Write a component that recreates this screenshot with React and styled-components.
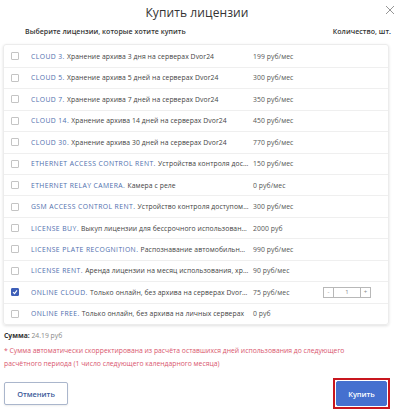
import React, { useState } from 'react';
import styled, { createGlobalStyle } from 'styled-components';

const GlobalStyle = createGlobalStyle`
  html, body {
    margin: 0;
    padding: 0;
    background: #fff;
    font-family: 'Open Sans', 'Noto Sans', sans-serif;
  }
  * {
    box-sizing: border-box;
  }
`;

const licenses = [
  { code: 'CLOUD 3', text: 'Хранение архива 3 дня на серверах Dvor24', price: '199 руб/мес' },
  { code: 'CLOUD 5', text: 'Хранение архива 5 дней на серверах Dvor24', price: '300 руб/мес' },
  { code: 'CLOUD 7', text: 'Хранение архива 7 дней на серверах Dvor24', price: '350 руб/мес' },
  { code: 'CLOUD 14', text: 'Хранение архива 14 дней на серверах Dvor24', price: '450 руб/мес' },
  { code: 'CLOUD 30', text: 'Хранение архива 30 дней на серверах Dvor24', price: '770 руб/мес' },
  { code: 'ETHERNET ACCESS CONTROL RENT', text: 'Устройства контроля доступом', price: '150 руб/мес' },
  { code: 'ETHERNET RELAY CAMERA', text: 'Камера с реле', price: '0 руб/мес' },
  { code: 'GSM ACCESS CONTROL RENT', text: 'Устройство контроля доступом для шлагбаума', price: '300 руб/мес' },
  { code: 'LICENSE BUY', text: 'Выкуп лицензии для бессрочного использования', price: '2000 руб' },
  { code: 'LICENSE PLATE RECOGNITION', text: 'Распознавание автомобильных номеров', price: '990 руб/мес' },
  { code: 'LICENSE RENT', text: 'Аренда лицензии на месяц использования, хранение', price: '90 руб/мес' },
  { code: 'ONLINE CLOUD', text: 'Только онлайн, без архива на серверах Dvor24', price: '75 руб/мес', checked: true },
  { code: 'ONLINE FREE', text: 'Только онлайн, без архива на личных серверах', price: '0 руб' },
];

const Page = styled.div`
  width: 401px;
  height: 409px;
  padding: 0 10px 0 3px;
  display: flex;
  flex-direction: column;
  color: #333;
`;

const TitleBar = styled.div`
  position: relative;
  height: 25px;
  display: flex;
  align-items: center;
  justify-content: center;
  padding-top: 1px;
`;

const Title = styled.h2`
  margin: 0;
  font-size: 12px;
  font-weight: 500;
  color: #333;
  letter-spacing: 0.1px;
`;

const Close = styled.button`
  position: absolute;
  right: -4px;
  top: 5px;
  width: 10px;
  height: 10px;
  padding: 0;
  border: none;
  background: none;
  display: flex;
`;

const HeadRow = styled.div`
  display: flex;
  justify-content: space-between;
  align-items: center;
  height: 14px;
  padding: 0 0 0 22px;
  font-size: 7px;
  font-weight: 600;
  color: #333;
  margin-bottom: 6px;
  letter-spacing: 0.05px;
`;

const Card = styled.div`
  border: 1px solid #ececec;
  border-radius: 3px;
  box-shadow: 0 1px 3px rgba(0, 0, 0, 0.12);
  width: 386px;
`;

const Row = styled.div`
  display: grid;
  grid-template-columns: 8px 234px 70px 48px;
  align-items: center;
  height: 21.45px;
  padding-left: 7px;
  border-top: ${p => (p.$first ? 'none' : '1px solid #efefef')};
  font-size: 6.8px;
  color: #444;
  letter-spacing: 0.08px;
`;

const Check = styled.span`
  width: 8px;
  height: 8px;
  border-radius: 1px;
  border: 1px solid ${p => (p.$on ? '#3e5fb8' : '#c4c4c4')};
  background: ${p => (p.$on ? '#3e5fb8' : '#fff')};
  display: flex;
  align-items: center;
  justify-content: center;
`;

const Name = styled.span`
  margin-left: 12px;
  white-space: nowrap;
  overflow: hidden;
  text-overflow: ellipsis;
  padding-right: 4px;
`;

const Code = styled.span`
  color: #4f6fae;
  letter-spacing: 0.42px;
`;

const Price = styled.span`
  color: #555;
`;

const Stepper = styled.div`
  display: flex;
  height: 11px;
  border: 1px solid #b8b8b8;
  font-size: 6px;
  color: #888;
`;

const StepBtn = styled.span`
  width: 10px;
  display: flex;
  align-items: center;
  justify-content: center;
  border-left: ${p => (p.$right ? '1px solid #b8b8b8' : 'none')};
  border-right: ${p => (p.$right ? 'none' : '1px solid #b8b8b8')};
`;

const StepValue = styled.span`
  flex: 1;
  display: flex;
  align-items: center;
  justify-content: center;
`;

const Sum = styled.div`
  margin-top: 6px;
  font-size: 6.8px;
  line-height: 10px;
  padding-left: 1px;
  color: #888;
  b {
    color: #333;
    font-weight: 700;
  }
`;

const Note = styled.div`
  margin-top: 3px;
  font-size: 6.8px;
  line-height: 13px;
  color: #d9566e;
  padding-left: 1px;
  width: 380px;
`;

const Footer = styled.div`
  display: flex;
  justify-content: space-between;
  align-items: center;
  margin-top: 8px;
  padding: 0 0 0 1px;
`;

const Highlight = styled.span`
  display: flex;
  border: 2px solid #c8161e;
  padding: 1px;
  margin-right: 1px;
`;

const Button = styled.button`
  font-family: inherit;
  font-size: 7.4px;
  font-weight: 600;
  border-radius: 2px;
  height: ${p => (p.$primary ? '25px' : '23px')};
  width: ${p => (p.$primary ? '51px' : '64px')};
  border: 1px solid ${p => (p.$primary ? '#4570cf' : '#aab6cc')};
  background: ${p => (p.$primary ? '#4570cf' : '#fff')};
  color: ${p => (p.$primary ? '#fff' : '#3b5a9a')};
  box-shadow: ${p => (p.$primary ? 'none' : '0 1px 2px rgba(0,0,0,0.08)')};
  padding: 0;
  cursor: pointer;
`;

export default function App() {
  const [items] = useState(licenses);

  return (
    <>
      <GlobalStyle />
      <Page>
        <TitleBar>
          <Title>Купить лицензии</Title>
          <Close aria-label="close">
            <svg width="10" height="10" viewBox="0 0 10 10">
              <path d="M1 1 L9 9 M9 1 L1 9" stroke="#8a8a8a" strokeWidth="0.9" />
            </svg>
          </Close>
        </TitleBar>
        <HeadRow>
          <span>Выберите лицензии, которые хотите купить</span>
          <span>Количество, шт.</span>
        </HeadRow>
        <Card>
          {items.map((item, i) => (
            <Row key={item.code} $first={i === 0}>
              <Check $on={item.checked}>
                {item.checked && (
                  <svg width="6" height="6" viewBox="0 0 6 6">
                    <path d="M1 3.2 L2.5 4.6 L5 1.4" stroke="#fff" strokeWidth="1.1" fill="none" />
                  </svg>
                )}
              </Check>
              <Name>
                <Code>{item.code}. </Code>
                {item.text}
              </Name>
              <Price>{item.price}</Price>
              {item.checked ? (
                <Stepper>
                  <StepBtn>-</StepBtn>
                  <StepValue>1</StepValue>
                  <StepBtn $right>+</StepBtn>
                </Stepper>
              ) : (
                <span />
              )}
            </Row>
          ))}
        </Card>
        <Sum>
          <b>Сумма:</b> 24.19 руб
        </Sum>
        <Note>
          * Сумма автоматически скорректирована из расчёта оставшихся дней использования до следующего
          расчётного периода (1 число следующего календарного месяца)
        </Note>
        <Footer>
          <Button>Отменить</Button>
          <Highlight>
            <Button $primary>Купить</Button>
          </Highlight>
        </Footer>
      </Page>
    </>
  );
}
